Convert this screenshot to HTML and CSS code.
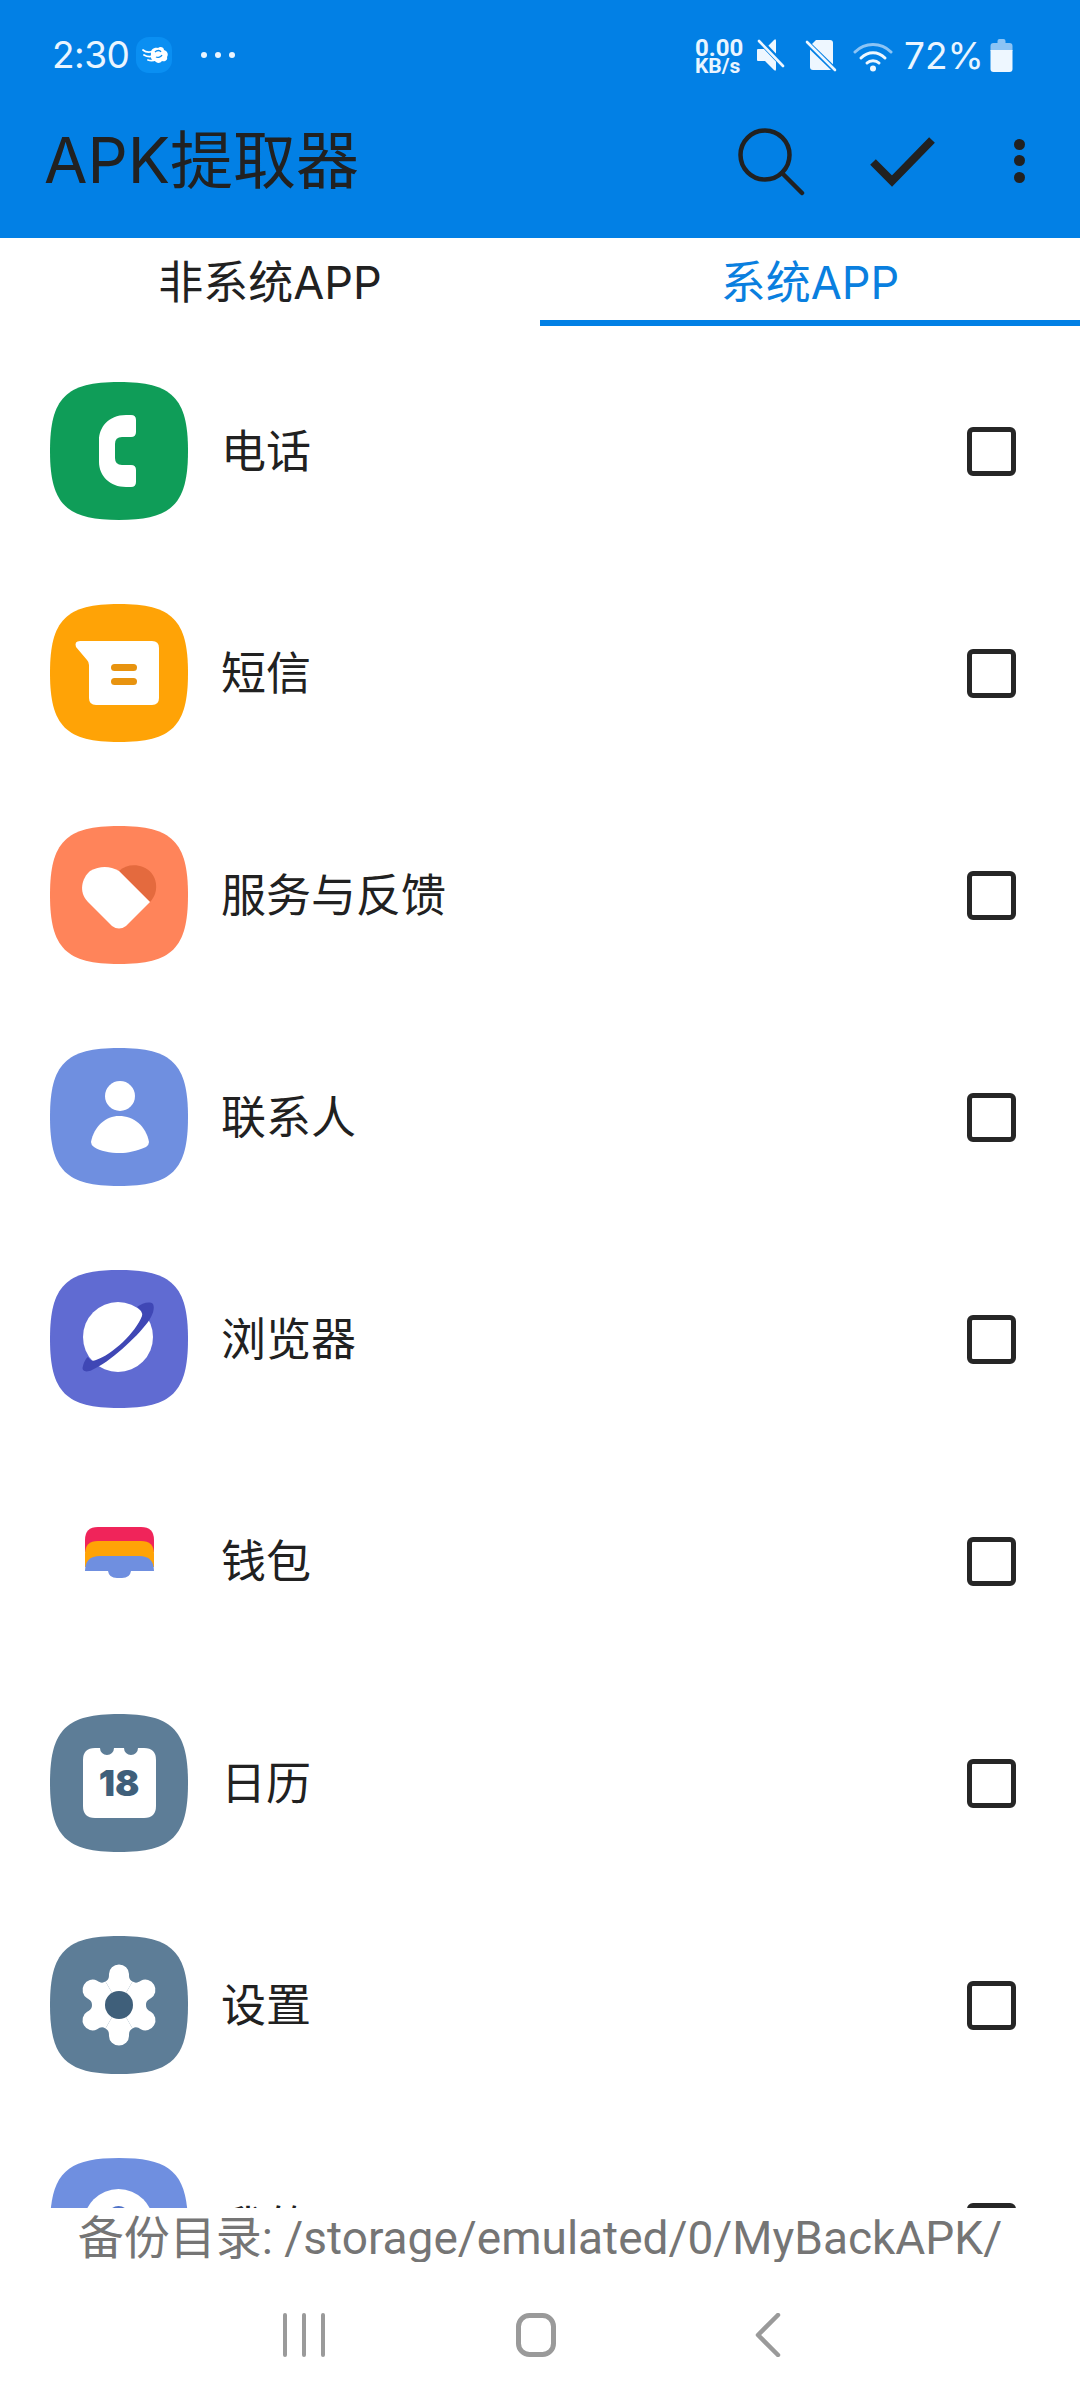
FILE: index.html
```html
<!DOCTYPE html>
<html lang="zh-CN">
<head>
<meta charset="utf-8">
<title>APK提取器</title>
<link rel="stylesheet" href="styles.css">
</head>
<body>
<div class="app">
  <header class="appbar">
    <div class="status">
      <div class="status-left">
        <span class="time">2:30</span>
        <span class="badge">
          <svg viewBox="0 0 36 36" width="36" height="36"><path class="w" d="M15 17 C14 13 18 10 22 11 C24 9 28 10 28 13 C31 14 33 17 31 20 C32 23 29 25 26 24 C24 27 20 26 19 24 C16 24 14 21 15 17Z"/><path d="M7 13 C10 15.5 14 15.5 18 14 M8 18 C12 20.5 16 20 20 18 M12 23 C15 24 17 24 20 22.5" fill="none" stroke="#fff" stroke-width="1.8" stroke-linecap="round"/><path d="M19 15 C21 13 24 13 25 15 M20 20 C22 21 25 20 26 18" fill="none" stroke="#0a8ff2" stroke-width="1.3"/></svg>
        </span>
        <span class="dots"><i></i><i></i><i></i></span>
      </div>
      <div class="status-right">
        <span class="speed"><b>0.00</b><b class="unit">KB/s</b></span>
        <svg class="si mute" viewBox="0 0 28 34" width="28" height="34"><path class="w" d="M1 11 H8 L17 2 Q19 0 19 3 V31 Q19 34 17 32 L8 23 H1 Q0 23 0 22 V12 Q0 11 1 11Z"/><path d="M3 3 L28 29" stroke="#0280e5" stroke-width="5.5"/><path d="M2 3 L26 28" stroke="#eef7ff" stroke-width="2.6" stroke-linecap="round"/></svg>
        <svg class="si sim" viewBox="0 0 32 34" width="32" height="34"><path class="w" d="M11 2 H25 Q28 2 28 5 V29 Q28 32 25 32 H8 Q5 32 5 29 V8 Z"/><path d="M1 4 L31 33" stroke="#0280e5" stroke-width="5.5"/><path d="M2 4 L30 32" stroke="#eef7ff" stroke-width="2.6" stroke-linecap="round"/></svg>
        <svg class="si wifi" viewBox="0 0 40 32" width="40" height="32"><path d="M2 12 C12 2 28 2 38 12" fill="none" stroke="#8cc4f5" stroke-width="3" stroke-linecap="round"/><path d="M8 18 C15 11 25 11 32 18" fill="none" stroke="#eef7ff" stroke-width="3" stroke-linecap="round"/><path d="M14 23 C17 20 23 20 26 23" fill="none" stroke="#eef7ff" stroke-width="3" stroke-linecap="round"/><circle class="w" cx="20" cy="28.5" r="3"/></svg>
        <span class="pct">72%</span>
        <svg class="si batt" viewBox="0 0 22 33" width="23" height="33"><path d="M7 2 Q7 0 9 0 H13 Q15 0 15 2 V4 H19 Q22 4 22 7 V12 H0 V7 Q0 4 3 4 H7 Z" fill="#8cc4f5"/><path class="w" d="M0 11 H22 V30 Q22 33 19 33 H3 Q0 33 0 30 Z"/></svg>
      </div>
    </div>
    <div class="toolbar">
      <h1 class="title">APK提取器</h1>
      <div class="actions">
        <svg class="act-search" viewBox="0 0 68 68" width="68" height="68"><circle cx="27" cy="27" r="24.5" fill="none" stroke="#212121" stroke-width="4.5"/><path d="M44 45 L64 65" stroke="#212121" stroke-width="4.5" stroke-linecap="round"/></svg>
        <svg class="act-check" viewBox="0 0 66 50" width="66" height="50"><path d="M3 25 L22 44 L62 3" fill="none" stroke="#212121" stroke-width="8"/></svg>
        <span class="act-more"><i></i><i></i><i></i></span>
      </div>
    </div>
  </header>

  <nav class="tabs">
    <div class="tab">非系统APP</div>
    <div class="tab active">系统APP</div>
  </nav>

  <main class="list">
    <div class="row">
      <svg class="icon" viewBox="0 0 138 138"><path class="green" d="M69 0 C122 0 138 16 138 69 C138 122 122 138 69 138 C16 138 0 122 0 69 C0 16 16 0 69 0Z"/><path class="w" d="M76 33 C58 33 49 46 49 58 V80 C49 94 60 105 76 105 H81 Q86 105 86 100 V88 Q86 83 81 83 H72 Q65 83 65 76 V62 Q65 55 72 55 H81 Q86 55 86 50 V38 Q86 33 81 33Z"/></svg>
      <span class="name">电话</span><span class="check"></span>
    </div>
    <div class="row">
      <svg class="icon" viewBox="0 0 138 138"><path class="amber" d="M69 0 C122 0 138 16 138 69 C138 122 122 138 69 138 C16 138 0 122 0 69 C0 16 16 0 69 0Z"/><path class="w" d="M30 37 H102 Q109 37 109 44 V94 Q109 101 102 101 H46 Q39 101 39 94 V61 Q39 58 37 56 L26 43 Q24 37 30 37Z"/><rect x="61" y="60" width="26" height="7" rx="3.5" fill="#e8930f"/><rect x="61" y="74" width="26" height="7" rx="3.5" fill="#e8930f"/></svg>
      <span class="name">短信</span><span class="check"></span>
    </div>
    <div class="row">
      <svg class="icon" viewBox="0 0 138 138"><path class="coral" d="M69 0 C122 0 138 16 138 69 C138 122 122 138 69 138 C16 138 0 122 0 69 C0 16 16 0 69 0Z"/><path d="M69 45 C75 39 85 38 93 41 C108 47 110 66 100 76 Z" fill="#e46a3e"/><path class="w" d="M69 45 L100 76 L76 100 Q69 105 62 100 L38 76 C28 66 32 52 40 45 Q55 37 69 45Z"/></svg>
      <span class="name">服务与反馈</span><span class="check"></span>
    </div>
    <div class="row">
      <svg class="icon" viewBox="0 0 138 138"><path class="blue" d="M69 0 C122 0 138 16 138 69 C138 122 122 138 69 138 C16 138 0 122 0 69 C0 16 16 0 69 0Z"/><circle class="w" cx="70" cy="48" r="15"/><path class="w" d="M41 94 C44 78 56 68 69 68 C84 68 96 78 99 94 Q99 97 96 99 C86 103 78 105 70 105 C60 105 50 103 44 99 Q41 97 41 94Z"/></svg>
      <span class="name">联系人</span><span class="check"></span>
    </div>
    <div class="row">
      <svg class="icon" viewBox="0 0 138 138"><path class="indigo" d="M69 0 C122 0 138 16 138 69 C138 122 122 138 69 138 C16 138 0 122 0 69 C0 16 16 0 69 0Z"/><circle class="w" cx="68" cy="67" r="35"/><path d="M87 37 C92 33 100 31 103 34 C105 38 103 45 98 52 C86 68 60 92 42 100 C36 103 31 101 33 96 C34 92 36 88 38 87 C40 90 42 92 46 90 C62 85 86 62 92 46 Q93 41 87 37Z" fill="#3f47b5"/></svg>
      <span class="name">浏览器</span><span class="check"></span>
    </div>
    <div class="row">
      <svg class="icon" viewBox="0 0 138 138"><path d="M35 48 Q35 35 48 35 H91 Q104 35 104 48 V60 H35 Z" fill="#f0245a"/><path d="M35 62 Q35 49 48 49 H91 Q104 49 104 62 V75 H35 Z" fill="#ffa306"/><path d="M35 79 Q35 64 50 64 H89 Q104 64 104 79 H81 Q80 86 72 86 H67 Q59 86 58 79 Z" fill="#6f8fe0"/></svg>
      <span class="name">钱包</span><span class="check"></span>
    </div>
    <div class="row">
      <svg class="icon" viewBox="0 0 138 138"><path class="slate" d="M69 0 C122 0 138 16 138 69 C138 122 122 138 69 138 C16 138 0 122 0 69 C0 16 16 0 69 0Z"/><path class="w" d="M45 34 H50 A7 7 0 0 0 64 34 H74 A7 7 0 0 0 88 34 H94 Q106 34 106 46 V92 Q106 104 94 104 H45 Q33 104 33 92 V46 Q33 34 45 34Z"/><text class="cal-num" x="69" y="82" text-anchor="middle">18</text></svg>
      <span class="name">日历</span><span class="check"></span>
    </div>
    <div class="row">
      <svg class="icon" viewBox="0 0 138 138"><path class="slate" d="M69 0 C122 0 138 16 138 69 C138 122 122 138 69 138 C16 138 0 122 0 69 C0 16 16 0 69 0Z"/><g transform="translate(69 69)" class="w"><path id="lobe" d="M0 0 L-13.5 -23.4 C-10 -25.4 -10 -28 -10 -31 A10 9.5 0 0 1 10 -31 C10 -28 10 -25.4 13.5 -23.4Z"/><use href="#lobe" transform="rotate(60)"/><use href="#lobe" transform="rotate(120)"/><use href="#lobe" transform="rotate(180)"/><use href="#lobe" transform="rotate(240)"/><use href="#lobe" transform="rotate(300)"/><circle r="14" fill="#3f5f7a"/></g></svg>
      <span class="name">设置</span><span class="check"></span>
    </div>
    <div class="row">
      <svg class="icon" viewBox="0 0 138 138"><path class="blue" d="M69 0 C122 0 138 16 138 69 C138 122 122 138 69 138 C16 138 0 122 0 69 C0 16 16 0 69 0Z"/><circle class="w" cx="68.5" cy="66" r="35"/><circle cx="68.5" cy="59" r="11" fill="#4f72c8"/></svg>
      <span class="name">我的</span><span class="check"></span>
    </div>
  </main>

  <footer class="backup">备份目录: /storage/emulated/0/MyBackAPK/</footer>

  <div class="navbar">
    <svg viewBox="0 0 44 44" width="44" height="44"><path d="M3 2 V42 M22 2 V42 M41 2 V42" stroke="#9a9a9a" stroke-width="4" stroke-linecap="round"/></svg>
    <svg class="nav-home" viewBox="0 0 40 44" width="40" height="44"><rect x="2.5" y="2.5" width="35" height="39" rx="11" fill="none" stroke="#9a9a9a" stroke-width="5"/></svg>
    <svg class="nav-back" viewBox="0 0 26 44" width="26" height="44"><path d="M23 2 L3 22 L23 42" fill="none" stroke="#9a9a9a" stroke-width="4.5" stroke-linecap="round" stroke-linejoin="round"/></svg>
  </div>
</div>
</body>
</html>
```

FILE: styles.css
```css
* { box-sizing: border-box; }
html, body { margin: 0; padding: 0; background: #fff; }
.app {
  width: 1080px; height: 2400px; display: flex; flex-direction: column; overflow: hidden;
  font-family: "Inter", "Noto Sans CJK SC", sans-serif; color: #212121;
}
.w { fill: #fff; }
.appbar { height: 238px; background: #0280e5; flex: none; }
.status { height: 110px; display: flex; justify-content: space-between; padding: 37px 67px 0 52px; color: #eaf5ff; }
.status-left, .status-right { display: flex; align-items: flex-start; }
.time { font-size: 37px; line-height: 36px; width: 84px; letter-spacing: -0.5px; }
.badge { width: 36px; height: 36px; border-radius: 13px; background: #0a8ff2; display: block; }
.badge svg { display: block; }
.dots { display: flex; gap: 8px; margin: 15px 0 0 29px; }
.dots i { width: 6px; height: 6px; border-radius: 50%; background: #eaf5ff; display: block; }
.speed { display: flex; flex-direction: column; font-family: "Roboto", sans-serif; font-size: 24px; line-height: 20px; width: 62px; margin-top: 1px; }
.speed b { display: block; font-weight: 700; }
.speed .unit { font-size: 21px; line-height: 17px; }
.si { display: block; flex: none; }
.si .w { fill: #eef7ff; }
.mute { margin: 1px 0 0 0; }
.sim { margin: 1px 0 0 20px; }
.wifi { margin: 3px 0 0 16px; }
.pct { font-size: 37px; line-height: 36px; margin: 1px 0 0 11px; width: 86px; }
.batt { margin: 2px 0 0 0; }
.toolbar { height: 128px; display: flex; justify-content: space-between; align-items: flex-start; padding-left: 44px; }
.title { margin: 0; font-size: 63px; font-weight: 400; line-height: 100px; }
.actions { display: flex; align-items: flex-start; width: 360px; height: 128px; }
.act-search { margin: 18px 0 0 18px; }
.act-check { margin: 27px 0 0 64px; }
.act-more { display: flex; flex-direction: column; gap: 5.5px; margin: 28.5px 0 0 77.5px; }
.act-more i { width: 11px; height: 11px; border-radius: 50%; background: #212121; display: block; }
.tabs { height: 88px; display: flex; flex: none; }
.tab { flex: 1; font-size: 45px; line-height: 76px; text-align: center; padding-top: 7px; }
.tab.active { color: #0a7fdf; border-bottom: 6px solid #0280e5; }
.list { flex: 1; min-height: 0; overflow: hidden; padding-top: 14px; }
.row { height: 222px; display: flex; align-items: center; padding: 0 64px 0 50px; }
.icon { width: 138px; height: 138px; flex: none; display: block; }
.name { flex: 1; font-size: 45px; margin: 0 0 6px 33px; color: #212121; }
.check { width: 49px; height: 49px; border: 5px solid #262626; border-radius: 6px; flex: none; }
.green { fill: #0f9d58; }
.amber { fill: #ffa306; }
.coral { fill: #ff845a; }
.blue { fill: #6f8fe0; }
.indigo { fill: #606bd2; }
.slate { fill: #5d7d97; }
.cal-num { font-size: 36px; font-weight: 900; fill: #3f5f7a; font-family: "Inter", sans-serif; }
.backup { height: 54px; flex: none; overflow: hidden; font-family: "Roboto", "Noto Sans CJK SC", sans-serif; font-size: 46px; line-height: 60px; text-align: center; color: #757575; white-space: nowrap; }
.navbar { height: 138px; flex: none; display: flex; align-items: flex-start; padding: 51px 0 0 282px; }
.nav-home { margin-left: 190px; }
.nav-back { margin-left: 199px; }
```
